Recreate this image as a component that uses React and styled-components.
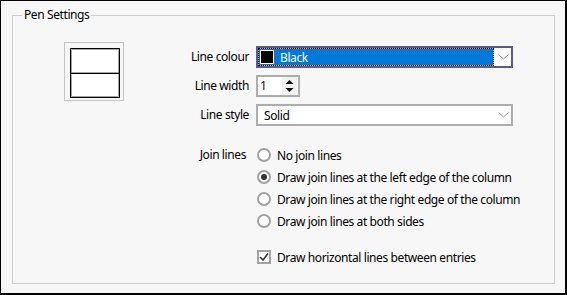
import styled, { createGlobalStyle } from "styled-components";

const GlobalStyle = createGlobalStyle`
  html, body {
    margin: 0;
    padding: 0;
    background: #ffffff;
  }
  body {
    font-family: "Noto Sans", "Open Sans", sans-serif;
    font-size: 12px;
    letter-spacing: -0.4px;
    color: #000;
  }
`;

const joinOptions = [
  { id: "none", label: "No join lines" },
  { id: "left", label: "Draw join lines at the left edge of the column" },
  { id: "right", label: "Draw join lines at the right edge of the column" },
  { id: "both", label: "Draw join lines at both sides" },
];

const Chevron = () => (
  <svg width="11" height="6" viewBox="0 0 11 6">
    <polyline points="0.5,0.5 5.5,5 10.5,0.5" fill="none" stroke="#9a9a9a" strokeWidth="1" />
  </svg>
);

const SpinArrows = () => (
  <svg width="9" height="14" viewBox="0 0 9 14">
    <polygon points="4.5,1 8.5,5 0.5,5" fill="#111" />
    <polygon points="0.5,9 8.5,9 4.5,13" fill="#111" />
  </svg>
);

const Tick = () => (
  <svg width="10" height="10" viewBox="0 0 10 10">
    <polyline points="1,5 4,8 9,1.5" fill="none" stroke="#333" strokeWidth="1.6" />
  </svg>
);

const App = () => {
  return (
    <>
      <GlobalStyle />
      <Window>
        <Group>
          <Legend>Pen Settings</Legend>
          <Body>
            <Preview>
              <PreviewInner>
                <PreviewHalf />
                <PreviewHalf />
              </PreviewInner>
            </Preview>
            <Form>
              <Label>Line colour</Label>
              <Combo $focused>
                <Selection>
                  <Swatch />
                  <ComboText $light>Black</ComboText>
                </Selection>
                <ChevronBox>
                  <Chevron />
                </ChevronBox>
              </Combo>

              <Label>Line width</Label>
              <Spinner>
                <SpinValue>1</SpinValue>
                <SpinButtons>
                  <SpinArrows />
                </SpinButtons>
              </Spinner>

              <Label>Line style</Label>
              <Combo>
                <ComboText>Solid</ComboText>
                <ChevronBox>
                  <Chevron />
                </ChevronBox>
              </Combo>

              <Label $top $shift={3}>
                Join lines
              </Label>
              <Options>
                {joinOptions.map((o) => (
                  <Option key={o.id}>
                    <Radio $checked={o.id === "left"} />
                    <span>{o.label}</span>
                  </Option>
                ))}
              </Options>

              <span />
              <Option $spaced>
                <CheckBox>
                  <Tick />
                </CheckBox>
                <span>Draw horizontal lines between entries</span>
              </Option>
            </Form>
          </Body>
        </Group>
      </Window>
    </>
  );
};

const Window = styled.div`
  box-sizing: border-box;
  width: 567px;
  height: 295px;
  background: #f7f7f7;
  border: solid #000;
  border-width: 1px 2px 2px 1px;
  padding: 6px 10px 9px 11px;
  display: flex;
  flex-direction: column;
`;

const Group = styled.fieldset`
  flex: 1;
  margin: 0;
  padding: 0;
  min-width: 0;
  border: 1px solid #cdcdcd;
`;

const Legend = styled.legend`
  margin-left: 9px;
  padding: 0 2px;
  line-height: 16px;
`;

const Body = styled.div`
  display: flex;
  align-items: flex-start;
`;

const Preview = styled.div`
  margin: 19px 0 0 51px;
  padding: 5px 3px 2px 5px;
  border: 1px solid #c4c4c4;
`;

const PreviewInner = styled.div`
  box-sizing: border-box;
  width: 50px;
  height: 50px;
  border: 1px solid #000;
  box-shadow: inset 0 0 0 1px rgba(0, 0, 0, 0.35);
  background: #fff;
  display: flex;
  flex-direction: column;
`;

const PreviewHalf = styled.div`
  flex: 1;
  & + & {
    border-top: 1px solid #000;
    box-shadow: 0 -1px 0 rgba(0, 0, 0, 0.35);
  }
`;

const Form = styled.div`
  padding-top: 23px;
  display: grid;
  grid-template-columns: 125px 257px;
  column-gap: 7px;
  row-gap: 7px;
  align-items: center;
`;

const Label = styled.div`
  text-align: right;
  line-height: 22px;
  padding-right: ${(p) => p.$shift || 0}px;
  align-self: ${(p) => (p.$top ? "start" : "center")};
  margin-top: ${(p) => (p.$top ? "11px" : "0")};
`;

const Combo = styled.div`
  box-sizing: border-box;
  height: 22px;
  border: 2px solid ${(p) => (p.$focused ? "#5d5890" : "#adadad")};
  background: #fff;
  display: flex;
  align-items: stretch;
  padding-left: ${(p) => (p.$focused ? "0" : "6px")};
`;

const Selection = styled.div`
  box-sizing: border-box;
  width: 236px;
  display: flex;
  align-items: center;
  border: 1px dotted #000;
  background: linear-gradient(#0078d7, #0078d7) padding-box, #f0a040 border-box;
  padding-left: 1px;
`;

const Swatch = styled.span`
  box-sizing: border-box;
  flex-shrink: 0;
  width: 14px;
  height: 14px;
  border: 1px solid #fff;
  background: #000;
`;

const ComboText = styled.span`
  flex: 1;
  display: flex;
  align-items: center;
  color: ${(p) => (p.$light ? "#fff" : "#000")};
  padding-left: ${(p) => (p.$light ? "6px" : "0")};
`;

const ChevronBox = styled.span`
  margin-left: auto;
  width: 17px;
  flex-shrink: 0;
  display: flex;
  align-items: center;
  padding-left: 4px;
  box-sizing: border-box;
`;

const Spinner = styled.div`
  box-sizing: border-box;
  width: 44px;
  height: 22px;
  border: 2px solid #adadad;
  background: #fff;
  display: flex;
`;

const SpinValue = styled.span`
  flex: 1;
  padding-left: 2px;
  line-height: 18px;
  color: #1a0a3a;
`;

const SpinButtons = styled.span`
  width: 15px;
  margin-right: 1px;
  background: #f2f2f2;
  display: flex;
  align-items: center;
  justify-content: center;
`;

const Options = styled.div`
  margin-top: 11px;
  padding-left: 1px;
  display: flex;
  flex-direction: column;
`;

const Option = styled.label`
  height: 22px;
  display: flex;
  align-items: center;
  gap: 6px;
  padding-left: ${(p) => (p.$spaced ? "1px" : "0")};
  margin-top: ${(p) => (p.$spaced ? "7px" : "0")};
  white-space: nowrap;
`;

const Radio = styled.span`
  box-sizing: border-box;
  flex-shrink: 0;
  width: 14px;
  height: 14px;
  border-radius: 50%;
  border: 2px solid #a2a2a2;
  background: #fff;
  display: grid;
  place-items: center;
  &::after {
    content: "";
    width: 6px;
    height: 6px;
    border-radius: 50%;
    background: ${(p) => (p.$checked ? "#333" : "transparent")};
  }
`;

const CheckBox = styled.span`
  box-sizing: border-box;
  flex-shrink: 0;
  width: 14px;
  height: 14px;
  border: 2px solid #a2a2a2;
  background: #fff;
  display: grid;
  place-items: center;
`;

export default App;
